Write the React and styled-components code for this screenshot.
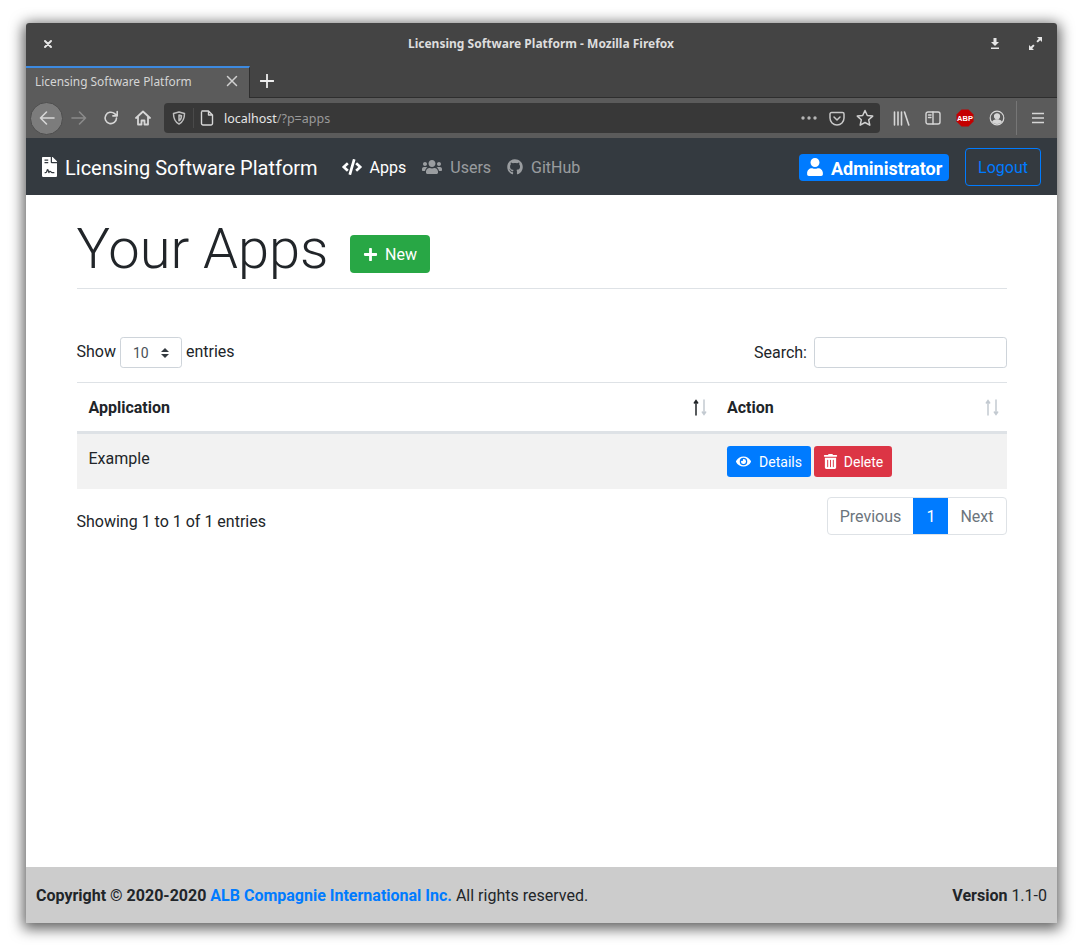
import React from "react";
import styled, { createGlobalStyle } from "styled-components";
import { FaFileContract, FaCode, FaUsers, FaGithub, FaUser, FaPlus, FaEye, FaTrashAlt } from "react-icons/fa";

const Global = createGlobalStyle`
  html, body { margin: 0; padding: 0; background: #fff; }
  body { font-family: Roboto, "Liberation Sans", sans-serif; font-size: 16px; color: #212529; }
  * { box-sizing: border-box; }
`;
const Page = styled.div`width: 1083px; height: 952px; padding: 23px 26px 29px; overflow: hidden;`;
const Win = styled.div`
  width: 1031px; height: 900px; display: flex; flex-direction: column; border-radius: 3px 3px 0 0;
  box-shadow: 0 3px 14px 3px rgba(0,0,0,.62); background: #fff; overflow: hidden;
`;
const TitleBar = styled.div`
  height: 43px; flex: none; background: #444; color: #e4e4e4; display: flex; align-items: center;
  justify-content: space-between; padding: 0 15px 2px 17px; font-family: "Noto Sans", sans-serif;
  font-size: 12px; font-weight: 700;
`;
const TitleText = styled.div`flex: 1; text-align: center; padding-left: 39px; color: #ddd;`;
const WinBtns = styled.div`display: flex; align-items: center; gap: 29px;`;
const TabRow = styled.div`
  height: 32px; flex: none; background: #444; display: flex; align-items: stretch;
  border-bottom: 1px solid #2e2e2e;
`;
const Tab = styled.div`
  width: 224px; margin-bottom: -1px; background: #5b5b5b; border-top: 2px solid #3d8ae0; border-right: 1px solid #2e2e2e;
  display: flex; align-items: center; justify-content: space-between; padding: 0 11px 4px 9px;
  color: #d5d5d5; font-family: "Noto Sans", sans-serif; font-size: 11.9px;
`;
const NewTab = styled.div`width: 33px; padding-bottom: 2px; display: flex; align-items: center; justify-content: center;`;
const Toolbar = styled.div`
  height: 40px; flex: none; background: #5b5b5b; display: flex; align-items: center; position: relative; padding-left: 4px;
`;
const BackBtn = styled.div`
  width: 33px; height: 33px; border-radius: 50%; background: #7c7c7c; border: 1px solid #4e4e4e; display: flex;
  align-items: center; justify-content: center; flex: none;
`;
const ToolIcon = styled.div`
  width: 32px; height: 32px; flex: none; display: flex; align-items: center; justify-content: center;
`;
const UrlIcon = styled(ToolIcon)`width: 20px;`;
const UrlBar = styled.div`
  width: 716px; height: 30px; flex: none; margin-left: 5px; background: #383838; border-radius: 4px; display: flex; align-items: center;
  padding: 0 6px 0 5px; font-family: "Noto Sans", sans-serif; font-size: 12.5px; color: #e6e6e6;
`;
const UrlSep = styled.div`width: 1px; height: 20px; background: #4a4a4a; margin: 0 6px 0 4px;`;
const UrlText = styled.div`flex: 1; margin-left: 10px;`;
const UrlDim = styled.span`color: #9a9a9a;`;
const UrlEnd = styled.div`display: flex; align-items: center; gap: 11px;`;
const RightTools = styled.div`display: flex; align-items: center; margin-left: 5px; height: 100%;`;
const ToolSep = styled.div`width: 1px; height: 34px; background: #767676; margin: 0 5px 0 3px;`;
const AbpText = styled.text`font-family: "Liberation Sans", sans-serif; font-size: 7.5px; font-weight: 700; fill: #fff;`;
const Navbar = styled.nav`
  height: 57px; flex: none; background: #343a40; display: flex; align-items: center; padding: 0 16px;
`;
const Brand = styled.div`
  display: flex; align-items: center; gap: 8px; color: #fff; font-size: 20px; margin: 2px 16px 0 0;
  svg { width: 15px; height: 20px; margin-top: -1px; }
`;
const NavItem = styled.div`
  display: flex; align-items: center; gap: 8px; padding: 0 8px; font-size: 16px; margin-top: 2px;
  color: ${p => (p.$active ? "#fff" : "rgba(255,255,255,.5)")};
  svg { margin-top: -2px; }
`;
const Spacer = styled.div`flex: 1;`;
const UserBadge = styled.div`
  height: 27px; margin-top: 1px; width: 150px; background: #007bff; color: #fff; border-radius: 4px; display: flex; align-items: center;
  gap: 7px; padding: 2px 0 0 7px; font-size: 18px; font-weight: 700; white-space: nowrap;
  svg { margin-top: -2px; }
`;
const Logout = styled.div`
  margin-left: 16px; width: 76px; height: 38px; border: 1px solid #007bff; border-radius: 4px; color: #007bff;
  display: flex; align-items: center; justify-content: center; font-size: 16px; padding-top: 1px;
`;
const Main = styled.main`flex: 1; padding: 0 50px 0 50.5px; display: flex; flex-direction: column;`;
const Header = styled.div`
  height: 94px; border-bottom: 1px solid #dee2e6; display: flex; align-items: flex-start; gap: 22px; flex: none;
`;
const H1 = styled.h1`margin: 21px 0 0; font-size: 56px; font-weight: 300; line-height: 67px; color: #212529;`;
const NewBtn = styled.div`
  margin-top: 40px; width: 80px; height: 38px; background: #28a745; color: #fff; border-radius: 4px; display: flex;
  align-items: center; justify-content: center; gap: 7px; padding-right: 1px; font-size: 16px;
`;
const Controls = styled.div`
  margin-top: 48px; height: 31px; display: flex; justify-content: space-between; align-items: center; flex: none;
`;
const Label = styled.div`display: flex; align-items: center; gap: 4px; font-size: 16px;`;
const ShowWord = styled.span`margin-top: -2px;`;
const SelectBox = styled.div`
  width: 62px; height: 31px; border: 1px solid #ced4da; border-radius: 3.2px; display: flex; align-items: center;
  justify-content: space-between; padding: 0 12px; font-size: 14px; color: #495057;
`;
const SearchLabel = styled(Label)`gap: 7px;`;
const SearchInput = styled.div`width: 193px; height: 31px; border: 1px solid #ced4da; border-radius: 3.2px; background: #fff;`;
const Table = styled.div`margin-top: 14px; border-top: 1px solid #dee2e6; flex: none;`;
const Row = styled.div`display: grid; grid-template-columns: 638.5px 1fr; ${p => p.$striped ? "background: #f2f2f2;" : ""}`;
const Th = styled.div`
  height: 51px; border-bottom: 3px solid #dee2e6; padding: 0 8px 0 12px; display: flex; align-items: center;
  justify-content: space-between; font-weight: 700; font-size: 16px;
`;
const Td = styled.div`height: 55px; padding: 15px 12px 0; display: flex; gap: 3px;`;
const ActionTd = styled(Td)`padding-top: 0; align-items: center;`;
const SmallBtn = styled.div`
  height: 31px; border-radius: 3.2px; background: ${p => p.$bg}; color: #fff; display: flex; align-items: center;
  justify-content: center; width: ${p => p.$w}px; font-size: 14px; gap: ${p => p.$gap}px;
`;
const Bottom = styled.div`margin-top: 8px; display: flex; justify-content: space-between; flex: none;`;
const Info = styled.div`padding-top: 15px; font-size: 16px;`;
const Pager = styled.div`display: flex; height: 38px; border: 1px solid #dee2e6; border-radius: 4px; color: #6c757d; overflow: hidden;`;
const PageCell = styled.div`
  height: 100%; display: flex; align-items: center; justify-content: center; width: ${p => p.$w}px;
  ${p => p.$active ? "background: #007bff; color: #fff; margin: -1px 0; height: 38px; padding-left: 1px;" : ""}
`;
const Footer = styled.footer`
  height: 56px; flex: none; background: #ccc; display: flex; align-items: center; justify-content: space-between;
  padding: 0 10px; font-size: 16px;
`;
const Link = styled.a`color: #007bff; font-weight: 700;`;

const Sort = ({ up, down }) => (
  <svg width="14" height="17" viewBox="0 0 14 17" fill="none" strokeLinecap="round">
    <path d="M3 16V2M1.300 4L3 1.500L4.700 4" stroke={up} strokeWidth="1.500" />
    <path d="M11 1V15M9.300 13L11 15.500L12.700 13" stroke={down} strokeWidth="1.500" />
  </svg>
);
const S = ({ children, w = 18, h = 18, vb = "0 0 18 18", sw = 1.6, c = "#d6d6d6" }) => (
  <svg width={w} height={h} viewBox={vb} fill="none" stroke={c} strokeWidth={sw} strokeLinecap="round" strokeLinejoin="round">{children}</svg>
);

export default function App() {
  return (
    <Page>
      <Global />
      <Win>
        <TitleBar>
          <S w={10} h={10} vb="0 0 10 10" sw={2} c="#e6e6e6"><path d="M2 2L8 8M8 2L2 8" /></S>
          <TitleText>Licensing Software Platform - Mozilla Firefox</TitleText>
          <WinBtns>
            <S w={10} h={12} vb="0 0 10 12" sw={0} c="#e6e6e6"><path d="M3.500 0h3v4H9L5 8 1 4h2.500zM1 9.500h8V11H1z" fill="#e6e6e6" stroke="none" /></S>
            <S w={13} h={13} vb="0 0 13 13" sw={0}><path d="M8 0h5v5l-1.800-1.800L8.800 5.600 7.400 4.200 9.800 1.800zM0 8l1.800 1.800 2.400-2.400 1.400 1.400-2.400 2.400L5 13H0z" fill="#e6e6e6" stroke="none" /></S>
          </WinBtns>
        </TitleBar>
        <TabRow>
          <Tab>
            Licensing Software Platform
            <S w={12} h={12} vb="0 0 12 12" sw={1.5} c="#d0d0d0"><path d="M1.500 1.500L10.500 10.500M10.500 1.500L1.500 10.500" /></S>
          </Tab>
          <NewTab><S w={14} h={14} vb="0 0 14 14" sw={1.8} c="#eee"><path d="M7 .5V13.500M.5 7H13.500" /></S></NewTab>
        </TabRow>
        <Toolbar>
          <BackBtn><S><path d="M16 9H2.500M8.500 3L2.500 9L8.500 15" /></S></BackBtn>
          <ToolIcon><S c="#8a8a8a"><path d="M2 9H15.500M9.500 3L15.500 9L9.500 15" /></S></ToolIcon>
          <ToolIcon><S w={16} h={16} vb="0 0 16 16"><path d="M13.500 8A5.700 5.700 0 1 1 11.600 3.700L14 5.800M14.200 1.500V5.900H9.900" /></S></ToolIcon>
          <ToolIcon><S w={16} h={16} vb="0 0 16 16" sw={1.8}><path d="M1 8L8 1.500L15 8M3 6.500V14.500H6.500V10.500H9.500V14.500H13V6.500" /></S></ToolIcon>
          <UrlBar>
            <UrlIcon><S w={14} h={14} vb="0 0 14 14" sw={1.5} c="#bdbdbd"><path d="M7 1L12.500 2.500C12.500 8 11 11 7 13C3 11 1.500 8 1.500 2.500ZM7 4L9.500 4.700C9.500 7 8.700 8.700 7 9.800Z" /></S></UrlIcon>
            <UrlSep />
            <S w={14} h={16} vb="0 0 14 16" sw={1.4} c="#d6d6d6"><path d="M2 1H8.500L12.500 5V13.500A1.500 1.500 0 0 1 11 15H3A1.500 1.500 0 0 1 1.500 13.500V2M8.500 1V5H12.500" /></S>
            <UrlText>localhost<UrlDim>/?p=apps</UrlDim></UrlText>
            <UrlEnd>
              <S w={18} h={6} vb="0 0 18 6" sw={0}><g fill="#b5b5b5" stroke="none"><circle cx="3" cy="3" r="1.700" /><circle cx="9" cy="3" r="1.700" /><circle cx="15" cy="3" r="1.700" /></g></S>
              <S w={16} h={15} vb="0 0 16 15" sw={1.500} c="#c8c8c8"><path d="M1 3A1.500 1.500 0 0 1 2.500 1.500H13.500A1.500 1.500 0 0 1 15 3V7A7 7 0 0 1 1 7ZM5 6L8 9L11 6" /></S>
              <S w={18} h={18} vb="0 0 18 18" sw={1.500} c="#d0d0d0"><path d="M9 1.500L11.300 6.500L16.700 7.100L12.700 10.800L13.800 16.200L9 13.500L4.200 16.200L5.300 10.800L1.300 7.100L6.700 6.500Z" /></S>
            </UrlEnd>
          </UrlBar>
          <RightTools>
            <ToolIcon><S w={17} h={15} vb="0 0 17 15" sw={1.600}><path d="M1.500 1V14M5 1V14M8.500 1V14M11.500 1L15.800 14" /></S></ToolIcon>
            <ToolIcon><S w={16} h={14} vb="0 0 16 14" sw={1.400}><rect x="1" y="1" width="14" height="12" rx="2" /><path d="M8 1V13M3.500 4H6M3.500 6.500H6" /></S></ToolIcon>
            <ToolIcon>
              <svg width="18" height="18" viewBox="0 0 18 18"><path d="M5.500 .5H12.500L17.500 5.500V12.500L12.500 17.500H5.500L.5 12.500V5.500Z" fill="#c40000" /><AbpText x="9" y="11.700" textAnchor="middle">ABP</AbpText></svg>
            </ToolIcon>
            <ToolIcon><S w={16} h={16} vb="0 0 16 16" sw={1.200}><circle cx="8" cy="8" r="6.800" /><circle cx="8" cy="6.300" r="2.500" fill="#d6d6d6" /><path d="M3.600 12C4.500 10 6 9.800 8 9.800S11.500 10 12.400 12C11 13.800 5 13.800 3.600 12Z" fill="#d6d6d6" /></S></ToolIcon>
            <ToolSep />
            <ToolIcon><S w={14} h={12} vb="0 0 14 12" sw={1.700}><path d="M1 1.500H13M1 6H13M1 10.500H13" strokeLinecap="butt" /></S></ToolIcon>
          </RightTools>
        </Toolbar>
        <Navbar>
          <Brand><FaFileContract color="#fff" />Licensing Software Platform</Brand>
          <NavItem $active><FaCode size={20} />Apps</NavItem>
          <NavItem><FaUsers size={20} />Users</NavItem>
          <NavItem><FaGithub size={16} />GitHub</NavItem>
          <Spacer />
          <UserBadge><FaUser size={18} />Administrator</UserBadge>
          <Logout>Logout</Logout>
        </Navbar>
        <Main>
          <Header>
            <H1>Your Apps</H1>
            <NewBtn><FaPlus size={15} />New</NewBtn>
          </Header>
          <Controls>
            <Label><ShowWord>Show</ShowWord> <SelectBox>10
              <svg width="8" height="10" viewBox="0 0 8 10"><path d="M4 0L8 4H0ZM0 6H8L4 10Z" fill="#343a40" /></svg>
            </SelectBox> <ShowWord>entries</ShowWord></Label>
            <SearchLabel>Search:<SearchInput /></SearchLabel>
          </Controls>
          <Table>
            <Row>
              <Th>Application<Sort up="#212529" down="#c3cad1" /></Th>
              <Th>Action<Sort up="#c3cad1" down="#c3cad1" /></Th>
            </Row>
            <Row $striped>
              <Td>Example</Td>
              <ActionTd>
                <SmallBtn $bg="#007bff" $w={84} $gap={8}><FaEye size={15} />Details</SmallBtn>
                <SmallBtn $bg="#dc3545" $w={78} $gap={6}><FaTrashAlt size={15} />Delete</SmallBtn>
              </ActionTd>
            </Row>
          </Table>
          <Bottom>
            <Info>Showing 1 to 1 of 1 entries</Info>
            <Pager>
              <PageCell $w={85}>Previous</PageCell>
              <PageCell $w={35} $active>1</PageCell>
              <PageCell $w={58}>Next</PageCell>
            </Pager>
          </Bottom>
        </Main>
        <Footer>
          <div><b>Copyright © 2020-2020 </b><Link>ALB Compagnie International Inc.</Link> All rights reserved.</div>
          <div><b>Version</b> 1.1-0</div>
        </Footer>
      </Win>
    </Page>
  );
}
